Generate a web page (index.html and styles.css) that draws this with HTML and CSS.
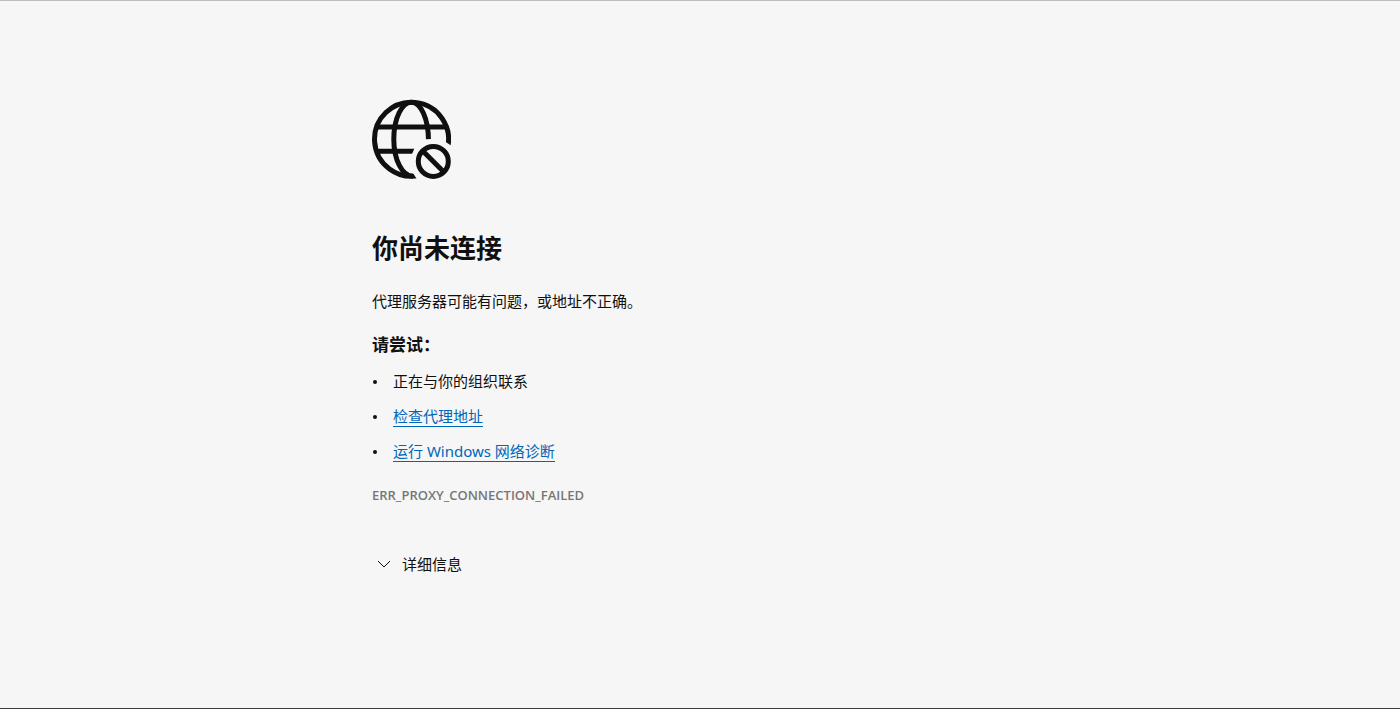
FILE: index.html
```html
<!DOCTYPE html>
<html lang="zh-CN">
<head>
<meta charset="utf-8">
<meta name="viewport" content="width=device-width, initial-scale=1">
<title>你尚未连接</title>
<link rel="stylesheet" href="styles.css">
</head>
<body>
<main class="error-page">
  <svg class="globe" viewBox="0 0 80 80" fill="none" stroke="currentColor" stroke-width="5" aria-hidden="true">
    <clipPath id="badge-gap"><path d="M0 0H80V46.6L74 42.5L60 40L54.9 40.3L43.4 49.5L41 55V72.5L45.8 80H0Z"/></clipPath>
    <g clip-path="url(#badge-gap)">
      <path d="M76.2 50A37 37 0 1 0 49 76.2"/>
      <path d="M57.5 42C57.5 19 49.5 3.2 40.3 3.2S22.8 19 22.8 40.2S31.5 77.2 42 77.2"/>
      <path d="M5 28H76M5 52.2H46"/>
    </g>
    <circle cx="62.3" cy="62.4" r="15"/>
    <path d="M51.8 51.9L72.8 72.9"/>
  </svg>
  <h1 class="title">你尚未连接</h1>
  <p class="summary">代理服务器可能有问题，或地址不正确。</p>
  <h2 class="subtitle">请尝试：</h2>
  <ul class="suggestions">
    <li class="suggestion">正在与你的组织联系</li>
    <li class="suggestion"><a class="link" href="#proxy">检查代理地址</a></li>
    <li class="suggestion"><a class="link" href="#diagnose">运行 Windows 网络诊断</a></li>
  </ul>
  <p class="error-code">ERR_PROXY_CONNECTION_FAILED</p>
  <button class="details" type="button">
    <svg class="chevron" viewBox="0 0 14 14" fill="none" stroke="currentColor" aria-hidden="true"><path d="M1 4L7 10L13 4"/></svg>
    详细信息
  </button>
</main>
</body>
</html>
```
FILE: styles.css
```css
* {
  box-sizing: border-box;
}

body {
  margin: 0;
  min-height: 100vh;
  padding: 0 24px;
  border-top: 1px solid #bdbdbd;
  border-bottom: 1px solid #3c3c3c;
  background: #f6f6f6;
  color: #101010;
  font: 15px/20px "Noto Sans", "Noto Sans CJK SC", sans-serif;
}

.error-page {
  max-width: 656px;
  margin: 0 auto;
  padding: 98px 0 40px;
}

.globe {
  display: block;
  width: 80px;
  height: 80px;
  margin-left: -1px;
}

.title {
  margin: 51px 0 25px;
  font-size: 26px;
  line-height: 36px;
  font-weight: 700;
}

.summary {
  margin: 0 0 23px;
}

.subtitle {
  margin: 0 0 15px;
  font-size: 17px;
  line-height: 22px;
  font-weight: 700;
}

.suggestions {
  display: grid;
  grid-auto-rows: 20px;
  gap: 15px;
  margin: 0 0 24px;
  padding: 0;
  list-style: none;
}

.suggestion {
  display: flex;
  align-items: center;
}

.suggestion::before {
  content: "";
  width: 4px;
  height: 4px;
  margin: 1px 16px 0 1px;
  border-radius: 50%;
  background: currentColor;
}

.link {
  border-bottom: 1px solid #0067b8;
  color: #0067b8;
  text-decoration: none;
}

.error-code {
  margin: 0 0 49px;
  color: #767676;
  font-family: "Open Sans", "Noto Sans", sans-serif;
  font-size: 13px;
  font-weight: 600;
}

.details {
  display: flex;
  align-items: center;
  gap: 11px;
  padding: 0 5px;
  border: 0;
  background: none;
  color: inherit;
  font: inherit;
  cursor: pointer;
}

.chevron {
  width: 14px;
  height: 14px;
}
```
